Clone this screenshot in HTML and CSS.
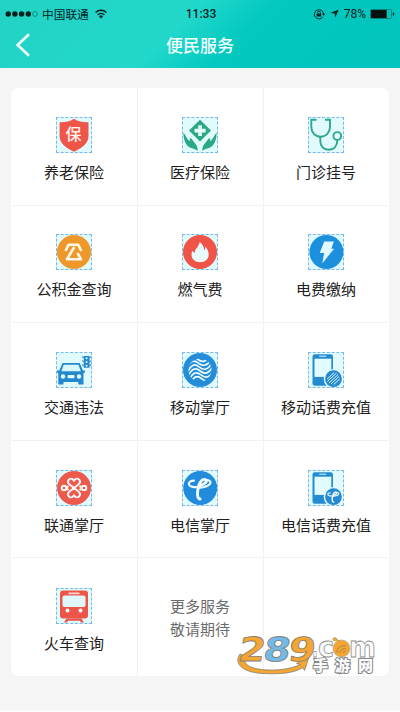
FILE: index.html
```html
<!DOCTYPE html>
<html lang="zh-CN">
<head>
<meta charset="utf-8">
<title>便民服务</title>
<link rel="stylesheet" href="styles.css">
</head>
<body>
<header class="header">
  <div class="status">
    <div class="carrier">
      <svg class="signal" width="34" height="8" viewBox="0 0 34 8"><g fill="#08221f"><circle cx="3.2" cy="4" r="2.7"/><circle cx="9.9" cy="4" r="2.7"/><circle cx="16.6" cy="4" r="2.7"/><circle cx="23.3" cy="4" r="2.7"/></g><circle cx="30" cy="4" r="2.4" fill="none" stroke="#087d76" stroke-width=".8"/></svg>
      <span class="network">中国联通</span>
      <svg class="wifi" width="12" height="10" viewBox="0 0 12 10"><g fill="none" stroke="#08221f" stroke-width="1.5"><path d="M.6 3.5a7.7 7.7 0 0 1 10.8 0M2.600 5.800a4.900 4.900 0 0 1 6.800 0"/></g><path d="M3.900 7.300a3 3 0 0 1 4.200 0L6 9.500z" fill="#08221f"/></svg>
    </div>
    <span class="time">11:33</span>
    <div class="device">
      <svg width="12" height="12" viewBox="0 0 12 12"><path d="M9.600 9.200A4.600 4.600 0 1 1 10.600 6" fill="none" stroke="#08221f"/><path d="M9 5.700h3.200l-1.600 2zM3.700 5.400h4.500v3H3.700z" fill="#08221f"/><path d="M4.600 5.500V4.600a1.400 1.400 0 0 1 2.800 0v.9" fill="none" stroke="#08221f" stroke-width=".9"/></svg>
      <svg class="location" width="9" height="9" viewBox="0 0 9 9"><path d="M8.700.4 5.300 8.500 4.700 4.500.5 4z" fill="#08221f"/></svg>
      <span class="percent">78%</span>
      <svg class="battery" width="25" height="10" viewBox="0 0 25 10"><rect x=".5" y=".5" width="21" height="9" rx="1" fill="none" stroke="#066f69" stroke-width=".8"/><path d="M1 1h15.700v8H1z" fill="#03110f"/><path d="M22.800 3.300c2 .3 2 3.100 0 3.400z" fill="#08221f"/></svg>
    </div>
  </div>
  <div class="nav">
    <svg class="back" width="16" height="24" viewBox="0 0 16 24"><path d="M14 1.200 2.600 12 14 22.800" fill="none" stroke="#f0fffd" stroke-width="2.600"/></svg>
    <h1 class="title">便民服务</h1>
  </div>
</header>
<main class="grid">
  <div class="cell"><svg class="icon" viewBox="0 0 36 36"><path d="M18 1.800C14 4.600 9 5.300 3.600 5.200V19c0 7.300 6.200 12.200 14.400 15.700C26.200 31.200 32.500 26.300 32.500 19V5.200C27 5.300 22 4.600 18 1.800z" fill="#ef564a"/><text class="shield-text" x="17.600" y="22.700" text-anchor="middle">保</text></svg><span class="label">养老保险</span></div>
  <div class="cell"><svg class="icon" viewBox="0 0 36 36"><path d="M18 2.800 29 13.600 18 24.500 7 13.600z" fill="#2ba982"/><path d="M16.200 8.200h3.700v3.600h3.700v3.700h-3.700v3.600h-3.700v-3.600h-3.700v-3.700h3.700z" fill="#e5fcfa"/><g fill="#2ba982"><path d="M1.300 16c1.800.6 2.400 4.200 5.600 7.500.8.700 1.400.1.900-1.200-.3-1.300.8-1.600 1.700-.5l4.600 6c1.200 1.600 1.600 3.600 1.600 6-2-1.400-3.400-2.100-5.900-2.600C4.500 29.700 2 25.500 1.300 16z"/><path d="M34.700 16c-1.800.6-2.400 4.200-5.600 7.500-.8.700-1.400.1-.9-1.200.3-1.300-.8-1.600-1.700-.5l-4.600 6c-1.200 1.600-1.600 3.600-1.600 6 2-1.400 3.400-2.100 5.900-2.600C31.500 29.700 34 25.500 34.700 16z"/></g></svg><span class="label">医疗保险</span></div>
  <div class="cell"><svg class="icon" viewBox="0 0 36 36"><g fill="none" stroke="#2fa889" stroke-width="1.900"><path d="M8.500 2.800H3.300V10c0 5.500 3.600 9.700 9.200 9.700S22 15.500 22 10V2.800h-5"/><path d="M12.300 19.700v4.500c0 5 3.500 8.600 8.200 8.600 6 0 8.700-4.600 8.900-9.700"/><circle cx="29.300" cy="19" r="3.900"/></g></svg><span class="label">门诊挂号</span></div>

  <div class="cell raised"><svg class="icon" viewBox="0 0 36 36"><circle cx="18" cy="18" r="17" fill="#ed9829"/><g fill="none" stroke="#fff8e8" stroke-width="2.600" stroke-linejoin="round"><path d="m9.500 17 3-6.300h9.600l3.200 6.300"/><path d="m18.300 13-7.300 12.200h14l-3.600-6.200"/></g></svg><span class="label">公积金查询</span></div>
  <div class="cell raised"><svg class="icon" viewBox="0 0 36 36"><circle cx="18" cy="18" r="17" fill="#ef5447"/><path d="M17.700 8c3 2 4.300 5 4.500 8 1-.5 1.300-2 1.200-3.500 2 2.200 3.300 5.500 3.300 8.200 0 4.300-3.600 7.500-8.500 7.500-5.200 0-8.700-3.100-8.700-7.700 0-1.300.3-2.700 1-3.800.7 1 1.200 1.800 2.300 2.200-.2-3.300 1.700-4.500 2.900-6.200 1-1.500 1.500-2.900 2-4.700z" fill="#e8fbfa"/></svg><span class="label">燃气费</span></div>
  <div class="cell raised"><svg class="icon" viewBox="0 0 36 36"><circle cx="18.400" cy="18" r="17" fill="#1c8fdd"/><path d="M16.200 7.500h9.700l-2.600 7.200h2.800L14.200 29.500l2-10.500h-4.500z" fill="#e2faff"/></svg><span class="label">电费缴纳</span></div>

  <div class="cell"><svg class="icon" viewBox="0 0 36 36"><g fill="#2488cd"><path d="M6.500 11h17.200l3.300 7.500H29v2l-1.500.5v11.500h-5.200V30H7.500v2.500H2.300V21L1 20.500v-2h2.300z"/><path d="M27.800 4h5.700v11.800h-5.700zM25.500 4.500h2v2.200zM25.500 8.500h2v2.200zM25.500 12.500h2v2.200zM35.700 4.500h-2v2.200zM35.700 8.500h-2v2.200zM35.700 12.500h-2v2.200z"/></g><path d="M7.700 12.700h14.800l2.300 6.600H5.400z" fill="#d9f8fc"/><g fill="#e1fbfe"><circle cx="7" cy="24.500" r="2.200"/><circle cx="23" cy="24.500" r="2.200"/><rect x="11.500" y="23" width="7" height="3.200" rx="1"/><circle cx="30.600" cy="6.200" r="1"/><circle cx="30.600" cy="10" r="1"/><circle cx="30.600" cy="13.700" r="1"/></g></svg><span class="label">交通违法</span></div>
  <div class="cell"><svg class="icon" viewBox="0 0 36 36"><clipPath id="globe"><circle cx="18" cy="18" r="11.500"/></clipPath><circle cx="18" cy="18" r="17" fill="#238dda"/><g clip-path="url(#globe)"><path transform="rotate(-12 18 18)" fill="none" stroke="#eefcff" stroke-width="1.700" d="M5 14c5-7 9-8 13-3s8 4 13-1M5 18c5-7 9-8 13-3s8 4 13-1M5 22c5-7 9-8 13-3s8 4 13-1M5 26c5-7 9-8 13-3s8 4 13-1M5 30c5-7 9-8 13-3s8 4 13-1M5 10c5-7 9-8 13-3s8 4 13-1"/></g></svg><span class="label">移动掌厅</span></div>
  <div class="cell"><svg class="icon" viewBox="0 0 36 36"><rect x="4.500" y="2.200" width="20.500" height="31.500" rx="2.300" fill="#258bd0"/><path d="M6.500 6.700h16.800v18.200H6.500z" fill="#e1fbfe"/><path d="M11.200 4.200h7" stroke="#c9effc" stroke-width="1.100"/><circle cx="25.500" cy="26.700" r="9.800" fill="#e1fbfe"/><circle cx="25.500" cy="26.700" r="8.400" fill="#268ad0"/><g fill="none" stroke="#dcf8fe" stroke-width="1"><path d="m19.200 27 7-6.500M19.500 29.300l9-8.300M21 31l9.200-8.500M23 32l8-7.500M25.700 32.500l6-5.500"/></g></svg><span class="label">移动话费充值</span></div>

  <div class="cell"><svg class="icon" viewBox="0 0 36 36"><circle cx="18" cy="18" r="17" fill="#ed594c"/><g fill="none" stroke="#fff9f3" stroke-width="1.900"><path d="m18 18-4.700-3.700c-3.400-3.200.8-7.600 3.700-4.800l1 1.200 1-1.200c2.900-2.800 7.100 1.600 3.700 4.800z"/><path d="m18 18-4.700 3.700c-3.400 3.200.8 7.600 3.700 4.800l1-1.200 1 1.200c2.900 2.800 7.100-1.600 3.700-4.800z"/><path d="m10 18 2.500-2M10 18l2.500 2M26 18l-2.500-2M26 18l-2.500 2"/><circle cx="8" cy="18" r="2.300"/><circle cx="28" cy="18" r="2.300"/></g></svg><span class="label">联通掌厅</span></div>
  <div class="cell"><svg class="icon" viewBox="0 0 36 36"><circle cx="18.200" cy="18" r="17" fill="#228bdc"/><g id="telecom" fill="none" stroke="#effbff" stroke-linecap="round"><path d="M17.800 16.500c-5 1.500-10.600.3-10.900-2.500-.2-2 2-3.200 5-3.300" stroke-width="2.200"/><path d="M18.500 15.700c5-1.600 7.600-5.200 4.700-6.200-3.900-.9-6.500 4.700-7.300 9.800-.8 5-.6 9.400 2.200 9.700" stroke-width="2.900"/><path d="M24 9.700c7.500.8 5.200 5.700-2.800 7.500-2.100.5-4 .8-5.400.7" stroke-width="2.100"/></g></svg><span class="label">电信掌厅</span></div>
  <div class="cell"><svg class="icon" viewBox="0 0 36 36"><rect x="4.500" y="2.200" width="20.500" height="31.500" rx="2.300" fill="#258bd0"/><path d="M6.500 6.700h16.800v18.200H6.500z" fill="#e1fbfe"/><path d="M11.200 4.200h7" stroke="#c9effc" stroke-width="1.100"/><circle cx="25.500" cy="26.700" r="9.800" fill="#e1fbfe"/><circle cx="25.500" cy="26.700" r="8.400" fill="#268ad0"/><use href="#telecom" transform="translate(16.300 17.300) scale(.51)"/></svg><span class="label">电信话费充值</span></div>

  <div class="cell"><svg class="icon" viewBox="0 0 36 36"><path d="M7 2.500h22c2 0 3 1 3 3v22c0 2-1 3-3 3H7c-2 0-3-1-3-3v-22c0-2 1-3 3-3z" fill="#ed5548"/><rect x="6.500" y="7.600" width="23" height="11.500" rx="2" fill="#e0f8fb"/><path d="M12.500 5.300h11" stroke="#ffd5ce" stroke-width="1.800"/><circle cx="11.500" cy="22.500" r="2" fill="#e7fcfc"/><circle cx="24.500" cy="22.500" r="2" fill="#e7fcfc"/><path d="m10.500 30.500-2.500 4h3l1.200-1.800h11.600L25 34.500h3l-2.500-4z" fill="#ed5548"/></svg><span class="label">火车查询</span></div>
  <div class="cell more"><span>更多服务</span><span>敬请期待</span></div>
  <div class="cell"></div>
</main>
<svg class="watermark" width="148" height="44" viewBox="0 0 148 44">
  <path d="M5 19C-1 27 5 37 27 38.500c20 1.200 33-1 41-6l1.500 3 5-15-13 8 4 1c-11 5-25 6.500-39 5C13 33 7 28 10 21z" fill="#f5a632" stroke="#858078" stroke-width=".8"/>
  <g class="number"><text transform="translate(2 26) skewX(-9)" textLength="27" lengthAdjust="spacingAndGlyphs" fill="#f5a632">2</text><text transform="translate(27 26) skewX(-9)" textLength="27" lengthAdjust="spacingAndGlyphs" fill="#72bbe9">8</text><text transform="translate(52 26) skewX(-9)" textLength="27" lengthAdjust="spacingAndGlyphs" fill="#f5a632">9</text></g>
  <g class="domain"><text x="77" y="22" textLength="6" lengthAdjust="spacingAndGlyphs">.</text><text x="83" y="22" textLength="16" lengthAdjust="spacingAndGlyphs">c</text><text x="114" y="22" textLength="27" lengthAdjust="spacingAndGlyphs">m</text></g>
  <circle cx="106.500" cy="13.500" r="8.500" fill="#f5a632" stroke="#aaa096" stroke-width=".6"/><path d="M99 6c-2-2-1-4 2-3l4 4" fill="#f5a632" stroke="#978b73" stroke-width=".6"/><path d="M102 18c0-5 3-8 9-7M105 18c0-3 3-5 6-4M108 18c0-1 1-2 3-1" fill="none" stroke="#987b4c" stroke-width=".8"/>
  <text class="site" y="35.500"><tspan x="78">手</tspan><tspan x="100">游</tspan><tspan x="123">网</tspan></text>
</svg>
</body>
</html>
```
FILE: styles.css
```css
* { box-sizing: border-box; }

body {
  position: relative;
  width: 400px;
  height: 712px;
  margin: 0;
  overflow: hidden;
  background: #f5f5f5;
  border-bottom: 2px solid #fafafa;
  color: #202020;
  font-family: "Noto Sans CJK SC", sans-serif;
}

.header {
  height: 68px;
  background: linear-gradient(135deg, #22d2c5 0%, #22d8cb 43%, #02c8c0 60%, #02c5bd 100%);
}

.status {
  display: grid;
  grid-template-columns: 1fr auto 1fr;
  align-items: center;
  height: 27px;
  padding: 0 5px;
  color: #08221f;
  font-size: 11.7px;
}

.carrier, .device { display: flex; align-items: center; }
.network { margin-left: 3px; line-height: 18px; }
.wifi { margin-left: 6px; }
.time { padding-left: 2px; font-family: Roboto, sans-serif; font-size: 12px; font-weight: 500; }
.device { justify-content: flex-end; }
.location { margin-left: 5px; }
.percent { margin-left: 5px; font: 12px Roboto, sans-serif; }
.battery { margin-left: 4px; }

.nav {
  display: grid;
  grid-template-columns: 32px 1fr 32px;
  align-items: center;
  height: 35px;
  padding: 0 15px;
}

.title {
  margin: 0;
  color: #f4fffe;
  font-size: 17px;
  font-weight: 500;
  line-height: 24px;
  text-align: center;
}

.grid {
  display: grid;
  grid-template-columns: repeat(3, 126px);
  grid-template-rows: repeat(5, 1fr);
  width: 378px;
  height: 588px;
  margin: 20px auto 0 11px;
  overflow: hidden;
  border-radius: 8px;
  background: #fff;
}

.cell {
  display: flex;
  flex-direction: column;
  align-items: center;
  padding: 29px 1px 0 0;
  border-left: 1px solid #f2f2f2;
  border-bottom: 1px solid #f2f2f2;
}

.cell:nth-child(3n+1) { padding-right: 0; border-left: 0; }
.cell:nth-last-child(-n+3) { padding-top: 30px; border-bottom: 0; }
.cell.raised { padding-top: 28.5px; }

.icon {
  width: 36px;
  height: 36px;
  background: #e1fbfd;
  outline: 1px dashed #78b9e9;
  outline-offset: -1px;
}

.shield-text { fill: #fff4ee; font-size: 16px; font-weight: 500; }
.label { margin-top: 8px; font-size: 15px; line-height: 22px; }
.cell.more { padding-top: 36px; color: #6b6b6b; font-size: 15px; line-height: 23px; }

.watermark { position: absolute; left: 235px; top: 635px; overflow: visible; }
.number { font: 700 33px "DejaVu Sans", sans-serif; stroke: #858078; stroke-width: .8px; }
.domain { font: bold 28px "DejaVu Sans", sans-serif; fill: #fafafa; stroke: #8c8c8c; stroke-width: .8px; }
.site { font-size: 15px; font-weight: 900; fill: #fafafa; stroke: #878787; stroke-width: 2px; paint-order: stroke; }
```
